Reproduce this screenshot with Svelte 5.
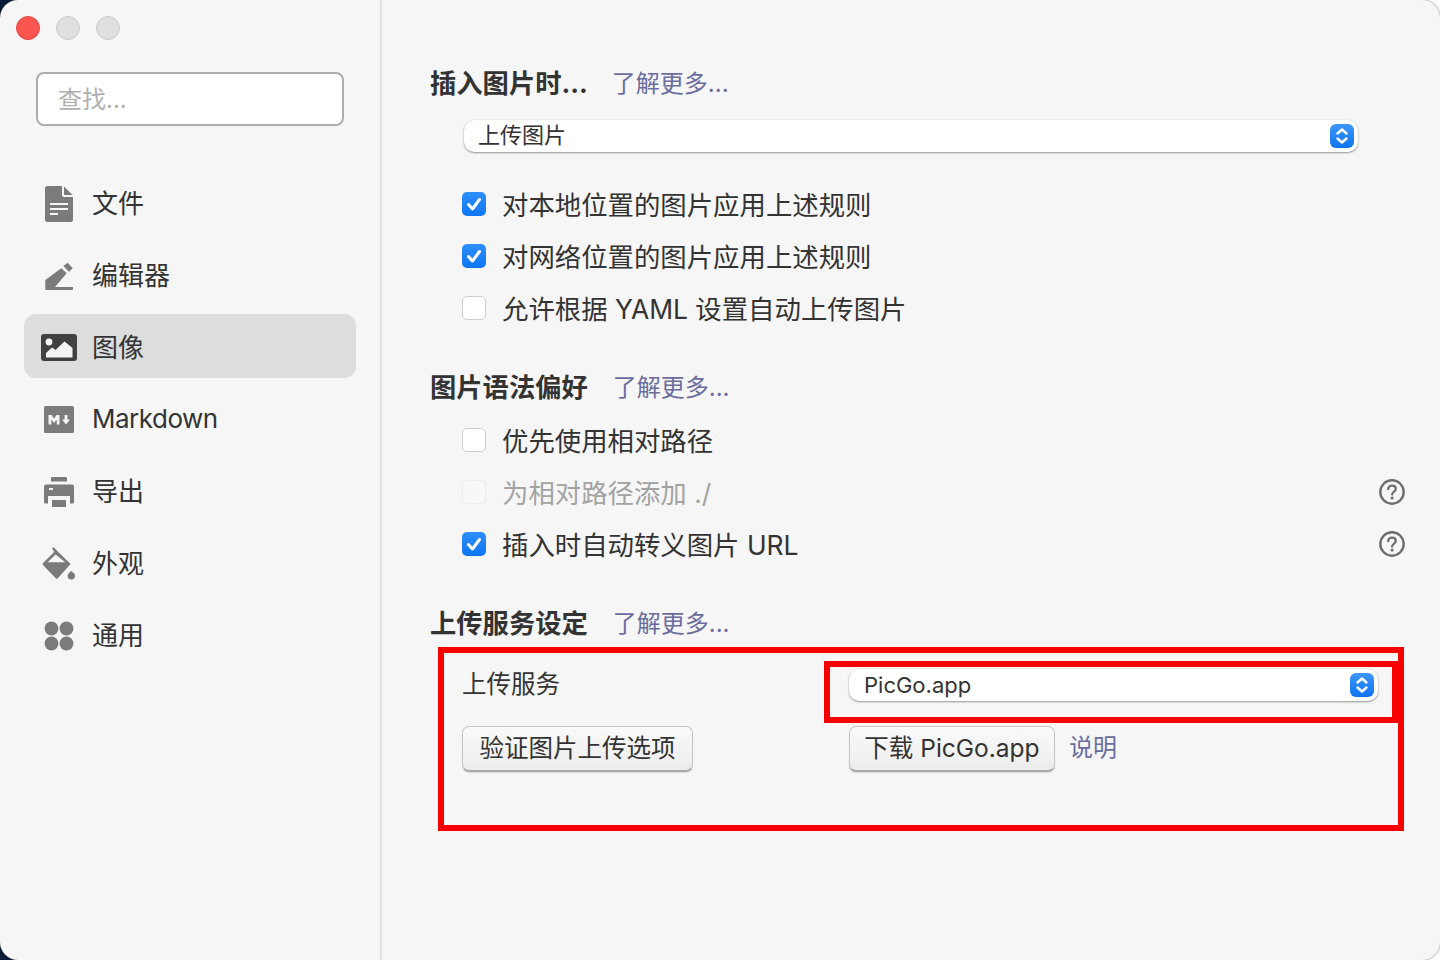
<script>
  const nav = [
    { id: 'file', label: '文件' },
    { id: 'edit', label: '编辑器' },
    { id: 'image', label: '图像', active: true },
    { id: 'md', label: 'Markdown', latin: true },
    { id: 'print', label: '导出' },
    { id: 'paint', label: '外观' },
    { id: 'general', label: '通用' }
  ];
  const group1 = [
    { label: '对本地位置的图片应用上述规则', checked: true },
    { label: '对网络位置的图片应用上述规则', checked: true },
    { label: '允许根据 YAML 设置自动上传图片', checked: false }
  ];
  const group2 = [
    { label: '优先使用相对路径', checked: false },
    { label: '为相对路径添加 ./', checked: false, disabled: true, help: true },
    { label: '插入时自动转义图片 URL', checked: true, help: true }
  ];
</script>

{#snippet stepper()}
  <span class="stepper">
    <svg viewBox="0 0 24 24" width="24" height="24" aria-hidden="true">
      <path d="M7.5 9.5 L12 5.5 L16.5 9.5 M7.5 14.5 L12 18.5 L16.5 14.5" fill="none" stroke="#fff" stroke-width="2.4" stroke-linecap="round" stroke-linejoin="round" />
    </svg>
  </span>
{/snippet}

{#snippet row(item)}
  <div class="row" class:disabled={item.disabled}>
    <span class="box" class:on={item.checked}>
      {#if item.checked}
        <svg viewBox="0 0 24 24" width="24" height="24" aria-hidden="true">
          <path d="M6.5 12.5 L10.5 17 L17.5 7.5" fill="none" stroke="#fff" stroke-width="3" stroke-linecap="round" stroke-linejoin="round" />
        </svg>
      {/if}
    </span>
    <span class="row-label">{item.label}</span>
    {#if item.help}
      <svg class="help" viewBox="0 0 26 26" width="26" height="26" aria-hidden="true">
        <circle cx="13" cy="13" r="11.7" fill="none" stroke="#6e6e6e" stroke-width="2.4" />
        <path d="M9.2 10.2 C9.2 7.8 11 6.6 13 6.6 C15.2 6.6 16.8 8 16.8 9.9 C16.8 12.6 13.1 12.6 13.1 15.6" fill="none" stroke="#6e6e6e" stroke-width="2.3" stroke-linecap="round" />
        <circle cx="13.1" cy="19" r="1.6" fill="#6e6e6e" />
      </svg>
    {/if}
  </div>
{/snippet}

<div class="window">
  <aside class="sidebar">
    <div class="lights">
      <span class="light red"></span>
      <span class="light"></span>
      <span class="light"></span>
    </div>
    <div class="search">查找...</div>
    <nav class="nav">
      {#each nav as item}
        <div class="nav-item" class:active={item.active}>
          <span class="nav-icon">
            {#if item.id === 'file'}
              <svg viewBox="0 0 28 36" width="28" height="36" aria-hidden="true">
                <path fill-rule="evenodd" d="M2.5 0 H17 V9 Q17 11 19 11 H28 V33.5 Q28 36 25.5 36 H2.5 Q0 36 0 33.5 V2.5 Q0 0 2.5 0 Z M5 17 V19 H23 V17 Z M5 22 V24 H23 V22 Z M5 27 V29 H13 V27 Z" fill="#7b7b7b" />
                <path d="M19 0.5 L27.5 9 H20 Q19 9 19 8 Z" fill="#7b7b7b" />
              </svg>
            {:else if item.id === 'edit'}
              <svg viewBox="0 0 28 28" width="28" height="28" aria-hidden="true">
                <path d="M0.3 18 L16.3 6.3 L21.7 11.3 L10 25 H28 V27 Q28 28 27 28 H1.3 Q0.3 28 0.3 27 Z" fill="#7b7b7b" />
                <path d="M18.3 4 L22.7 0.7 L27.7 6.3 L24 9.7 Z" fill="#7b7b7b" />
              </svg>
            {:else if item.id === 'image'}
              <svg viewBox="0 0 36 28" width="36" height="28" aria-hidden="true">
                <rect x="0" y="0" width="36" height="27" rx="3" fill="#3f4143" />
                <circle cx="8" cy="8" r="3.4" fill="#f4f5f5" />
                <path d="M5 23.5 V19 L11 13.5 L14.5 16 L23.5 7.5 L31.5 14 V23.5 Z" fill="#f4f5f5" />
              </svg>
            {:else if item.id === 'md'}
              <svg viewBox="0 0 30 28" width="30" height="28" aria-hidden="true">
                <rect x="0" y="0" width="30" height="27" rx="1.5" fill="#7b7b7b" />
                <path d="M4.5 18.5 V9 H7.5 L10 12.8 L12.5 9 H15.5 V18.5 H12.7 V13.6 L10 17 L7.3 13.6 V18.5 Z" fill="#f4f4f4" />
                <path d="M20.6 9 H23.4 V13.6 H26 L22 18.5 L18 13.6 H20.6 Z" fill="#f4f4f4" />
              </svg>
            {:else if item.id === 'print'}
              <svg viewBox="0 0 30 30" width="30" height="30" aria-hidden="true">
                <path d="M7 0.5 Q7 0 8 0 H22 Q23 0 23 0.5 V4.5 H7 Z" fill="#7b7b7b" />
                <path fill-rule="evenodd" d="M2 7.5 H28 Q30 7.5 30 9.5 V25 Q30 26.5 28.5 26.5 H26 V19 H4 V26.5 H1.5 Q0 26.5 0 25 V9.5 Q0 7.5 2 7.5 Z M5 11 V13 H9 V11 Z" fill="#7b7b7b" />
                <rect x="8" y="23" width="14" height="7" fill="#7b7b7b" />
              </svg>
            {:else if item.id === 'paint'}
              <svg viewBox="0 0 34 34" width="34" height="34" aria-hidden="true">
                <path fill-rule="evenodd" d="M10 1.3 L11.5 0 L15 3.7 L28.7 17 L15.7 31.3 Q14.7 32.3 13.7 31.3 L1 18 Q0 17 1 16 L12.2 5 Z M13.7 7.5 L5.5 15.3 H23.2 Z" fill="#7b7b7b" />
                <path d="M29.3 24 C30.8 25.5 33 26.5 33 28.7 A3.7 3.7 0 0 1 25.6 28.7 C25.6 26.5 27.8 25.5 29.3 24 Z" fill="#7b7b7b" />
              </svg>
            {:else if item.id === 'general'}
              <svg viewBox="0 0 30 30" width="30" height="30" aria-hidden="true">
                <circle cx="7.5" cy="7.5" r="6.9" fill="#7b7b7b" />
                <circle cx="22.5" cy="7.5" r="6.9" fill="#7b7b7b" />
                <circle cx="7.5" cy="22.5" r="6.9" fill="#7b7b7b" />
                <circle cx="22.5" cy="22.5" r="6.9" fill="#7b7b7b" />
              </svg>
            {/if}
          </span>
          <span class="nav-label" class:latin={item.latin}>{item.label}</span>
        </div>
      {/each}
    </nav>
  </aside>

  <main class="content">
    <section class="first">
      <div class="heading heading-first"><strong>插入图片时...</strong><span class="link">了解更多...</span></div>
      <div class="select select-a"><span class="select-text">上传图片</span>{@render stepper()}</div>
      <div class="rows">
        {#each group1 as item}{@render row(item)}{/each}
      </div>
    </section>

    <section class="second">
      <div class="heading"><strong>图片语法偏好</strong><span class="link">了解更多...</span></div>
      <div class="rows rows-b">
        {#each group2 as item}{@render row(item)}{/each}
      </div>
    </section>

    <section class="third">
      <div class="heading"><strong>上传服务设定</strong><span class="link">了解更多...</span></div>
      <div class="outline">
        <div class="grid">
          <div class="service-label">上传服务</div>
          <div class="select-wrap">
            <div class="select select-b"><span>PicGo.app</span>{@render stepper()}</div>
          </div>
          <div><button class="btn btn-verify">验证图片上传选项</button></div>
          <div class="actions">
            <button class="btn btn-dl">下载 PicGo.app</button>
            <span class="link link-doc">说明</span>
          </div>
        </div>
      </div>
    </section>
  </main>
</div>

<style>
  :global(body) {
    margin: 0;
    background: linear-gradient(to right, #0d1b3a 50%, #fbfbfb 50%);
  }

  .window {
    width: 1440px;
    height: 960px;
    display: flex;
    background: #f6f6f6;
    border-radius: 18px;
    box-shadow: 0 0 2px rgba(0, 0, 0, 0.55);
    overflow: hidden;
    color: #333;
    font-family: "Inter", "Noto Sans CJK SC", sans-serif;
    font-size: 26px;
  }

  .sidebar {
    width: 380px;
    flex: none;
    border-right: 2px solid #e3e3e3;
    display: flex;
    flex-direction: column;
    padding-top: 16px;
  }

  .lights {
    display: flex;
    gap: 16px;
    padding-left: 16px;
  }

  .light {
    width: 24px;
    height: 24px;
    box-sizing: border-box;
    border-radius: 50%;
    background: #dfdfdf;
    border: 1px solid #cbcbcb;
  }

  .light.red {
    background: #fb5550;
    border-color: #e2463f;
  }

  .search {
    margin: 32px 0 0 36px;
    width: 308px;
    height: 54px;
    box-sizing: border-box;
    background: #fff;
    border: 2px solid #adadad;
    border-radius: 8px;
    padding: 1px 0 0 20px;
    line-height: 50px;
    font-size: 24px;
    color: #b0b0b0;
  }

  .nav {
    margin-top: 44px;
    padding: 0 24px;
    display: flex;
    flex-direction: column;
    gap: 8px;
  }

  .nav-item {
    width: 332px;
    height: 64px;
    box-sizing: border-box;
    padding-top: 4px;
    display: flex;
    align-items: center;
    border-radius: 12px;
  }

  .nav-item.active {
    background: #dcdddd;
  }

  .nav-icon {
    width: 68px;
    flex: none;
    display: flex;
    align-items: center;
    justify-content: center;
    padding-left: 2px;
    box-sizing: border-box;
  }

  .nav-icon svg {
    display: block;
  }

  .nav-label {
    font-size: 26px;
    line-height: 60px;
  }

  .nav-label.latin {
    letter-spacing: -0.5px;
    margin-top: -2px;
  }

  .content {
    flex: 1;
    min-width: 0;
    padding: 0 0 0 48px;
  }

  .first {
    padding-top: 67px;
  }

  .heading {
    height: 34px;
    line-height: 34px;
    display: flex;
    gap: 25px;
    font-size: 26.3px;
  }

  .heading-first {
    gap: 24px;
  }

  .heading strong {
    font-weight: 700;
    color: #333;
  }

  .link {
    color: #6a6d9e;
    font-size: 24px;
  }

  .select {
    background: #fff;
    border-radius: 10px;
    box-shadow: 0 1px 2px rgba(0, 0, 0, 0.38), 0 0 1px rgba(0, 0, 0, 0.18);
    display: flex;
    align-items: center;
    justify-content: space-between;
    box-sizing: border-box;
    font-size: 22px;
  }

  .select-a {
    margin: 19px 0 0 34px;
    width: 894px;
    height: 32px;
    padding: 0 4px 0 14px;
  }

  .select-text {
    padding-bottom: 2px;
    line-height: 28px;
  }

  .select-b {
    width: 529px;
    height: 32px;
    padding: 0 4px 0 15px;
    margin-top: 16px;
  }

  .stepper {
    width: 24px;
    height: 24px;
    border-radius: 6px;
    background: linear-gradient(#3c96fb, #0f74f0);
    display: block;
  }

  .stepper svg {
    display: block;
  }

  .rows {
    margin-top: 27px;
    display: flex;
    flex-direction: column;
  }

  .rows-b {
    margin-top: 10px;
  }

  .row {
    height: 52px;
    display: flex;
    align-items: center;
    padding-left: 32px;
    position: relative;
  }

  .row-label {
    margin-left: 16px;
    font-size: 26.4px;
    line-height: 50px;
  }

  .row.disabled .row-label {
    color: #a3a3a3;
  }

  .box {
    width: 24px;
    height: 24px;
    box-sizing: border-box;
    flex: none;
    margin-top: -2px;
    border-radius: 5px;
    background: #fff;
    border: 1px solid #cfcfcf;
  }

  .box.on {
    background: linear-gradient(#2f8ffb, #0f76f2);
    border: 0;
  }

  .box svg {
    display: block;
  }

  .row.disabled .box {
    background: #f8f8f8;
    border-color: #ececec;
  }

  .help {
    position: absolute;
    right: 35px;
    top: 12px;
  }

  .second {
    margin-top: 36px;
  }

  .third {
    margin-top: 36px;
  }

  .outline {
    margin: 6px 0 0 8px;
    width: 966px;
    height: 184px;
    box-sizing: border-box;
    border: 6px solid #f60000;
  }

  .grid {
    display: grid;
    grid-template-columns: 387px 1fr;
    grid-template-rows: 66px auto;
    padding-left: 18px;
  }

  .service-label {
    font-size: 24.5px;
    line-height: 62px;
  }

  .select-wrap {
    position: relative;
    height: 66px;
    display: flex;
  }

  .select-wrap::before {
    content: "";
    position: absolute;
    left: -25px;
    top: 8px;
    width: 574px;
    height: 62px;
    box-sizing: border-box;
    border: 6px solid #f60000;
    pointer-events: none;
  }

  .btn {
    font: inherit;
    font-size: 24.5px;
    color: #333;
    height: 46px;
    margin-top: 7px;
    padding: 0 0 4px;
    box-sizing: border-box;
    border: 1px solid #c4c4c4;
    border-bottom: 2px solid #a9a9a9;
    border-radius: 7px;
    background: linear-gradient(#fafafa, #ececec);
    box-shadow: 0 1px 1px rgba(0, 0, 0, 0.12);
    display: block;
  }

  .btn-verify {
    width: 231px;
  }

  .btn-dl {
    width: 206px;
  }

  .actions {
    display: flex;
    align-items: flex-start;
    gap: 14px;
  }

  .link-doc {
    line-height: 46px;
    margin-top: 6px;
  }
</style>
